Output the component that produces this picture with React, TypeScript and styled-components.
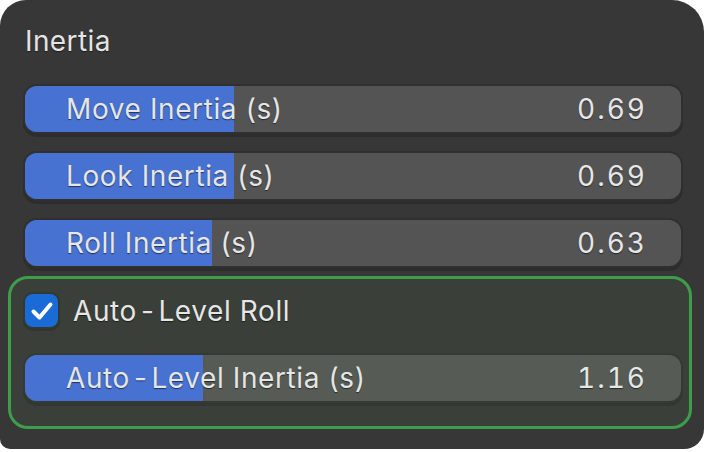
import React from "react";
import styled, { createGlobalStyle } from "styled-components";

const GlobalStyle = createGlobalStyle`
  html, body {
    margin: 0;
    padding: 0;
    background: #ffffff;
  }
  body {
    font-family: Inter, "Noto Sans", "DejaVu Sans", sans-serif;
  }
`;

const Panel = styled.div`
  box-sizing: border-box;
  width: 704px;
  height: 449px;
  background: #373737;
  border-radius: 26px 32px 20px 10px;
  padding: 24px 23px 0 25px;
  display: flex;
  flex-direction: column;
`;

const Title = styled.div`
  color: #e4e4e4;
  font-size: 28px;
  line-height: 34px;
  height: 34px;
  letter-spacing: 0.4px;
  text-shadow: 0 1px 1px rgba(0, 0, 0, 0.5);
  margin-bottom: 28px;
`;

const Rows = styled.div`
  display: flex;
  flex-direction: column;
  gap: 21px;
`;

const Slider = styled.div<{ $grouped?: boolean }>`
  position: relative;
  box-sizing: border-box;
  height: 46px;
  border-radius: 12px;
  overflow: hidden;
  background: ${(p) => (p.$grouped ? "#565c55" : "#545454")};
  box-shadow: ${(p) =>
    p.$grouped
      ? "0 0 0 2px #363a34, 0 3px 0 2px #333731"
      : "0 0 0 2px #303030, 0 3px 0 2px #2d2d2d"};
  display: flex;
  align-items: center;
  justify-content: space-between;
  padding: 0 34px 0 41px;
`;

const Fill = styled.div`
  position: absolute;
  left: 0;
  top: 0;
  bottom: 0;
  background: #4772d1;
`;

const Label = styled.span`
  position: relative;
  color: #e6e6e6;
  font-size: 28px;
  letter-spacing: 0.6px;
  text-shadow: 0 1px 1px rgba(0, 0, 0, 0.55);
  white-space: pre;
`;

const Value = styled(Label)`
  letter-spacing: 2px;
  font-variant-numeric: tabular-nums;
`;

const Hyphen = styled.span`
  margin: 0 4px;
`;

const Group = styled.div`
  margin: 10px -11px 0 -17px;
  box-sizing: border-box;
  height: 153px;
  border: 3px solid #3e9d4b;
  border-radius: 20px;
  background: #3b3f39;
  padding: 15px 8px 0 14px;
  display: flex;
  flex-direction: column;
  gap: 28px;
`;

const CheckRow = styled.div`
  display: flex;
  align-items: center;
  gap: 15px;
  height: 33px;
`;

const CheckBox = styled.div`
  width: 33px;
  height: 33px;
  box-sizing: border-box;
  border-radius: 8px;
  background: #1b6bd6;
  box-shadow: 0 0 0 2px #343832, 0 2px 0 2px #32362f;
  display: flex;
  align-items: center;
  justify-content: center;
`;

type Row = { label: React.ReactNode; value: string; fill: number };

const rows: Row[] = [
  { label: "Move Inertia (s)", value: "0.69", fill: 0.319 },
  { label: "Look Inertia (s)", value: "0.69", fill: 0.319 },
  { label: "Roll Inertia (s)", value: "0.63", fill: 0.285 },
];

const AutoLevel = ({ rest }: { rest: string }) => (
  <>
    Auto<Hyphen>-</Hyphen>Level{rest}
  </>
);

const SliderRow = ({ row, grouped }: { row: Row; grouped?: boolean }) => (
  <Slider $grouped={grouped}>
    <Fill style={{ width: `${row.fill * 100}%` }} />
    <Label>{row.label}</Label>
    <Value>{row.value}</Value>
  </Slider>
);

export default function App() {
  return (
    <>
      <GlobalStyle />
      <Panel>
        <Title>Inertia</Title>
        <Rows>
          {rows.map((r, i) => (
            <SliderRow key={i} row={r} />
          ))}
        </Rows>
        <Group>
          <CheckRow>
            <CheckBox>
              <svg width="24" height="24" viewBox="0 0 24 24" fill="none">
                <path
                  d="M3.5 12.5 L9.5 18.5 L20.5 5.5"
                  stroke="#ffffff"
                  strokeWidth="4"
                  strokeLinecap="round"
                  strokeLinejoin="round"
                />
              </svg>
            </CheckBox>
            <Label>
              <AutoLevel rest=" Roll" />
            </Label>
          </CheckRow>
          <SliderRow
            grouped
            row={{
              label: <AutoLevel rest=" Inertia (s)" />,
              value: "1.16",
              fill: 0.271,
            }}
          />
        </Group>
      </Panel>
    </>
  );
}
